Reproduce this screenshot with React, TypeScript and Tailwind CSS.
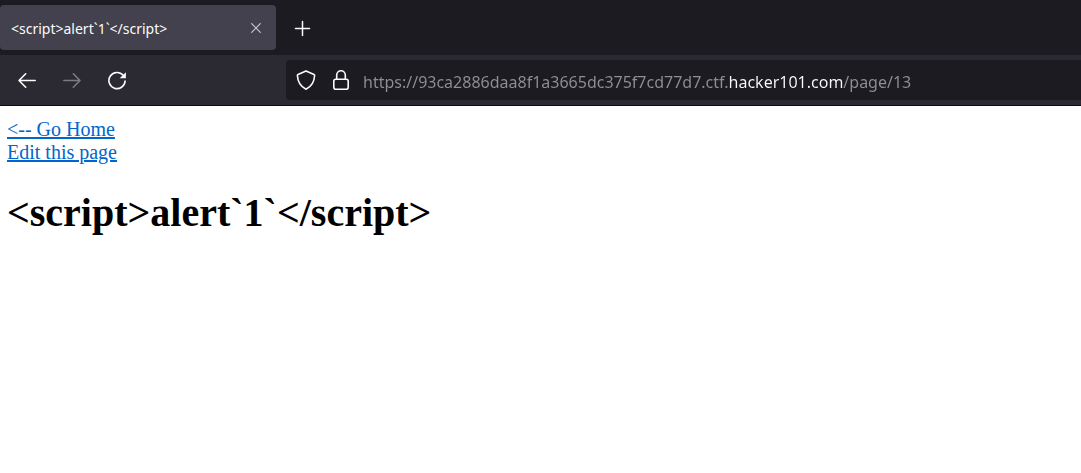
import { useState } from "react";

const PAYLOAD = "<script>alert`1`</script>";

export default function App() {
  const [address, setAddress] = useState(
    "https://93ca2886daa8f1a3665dc375f7cd77d7.ctf.hacker101.com/page/13"
  );

  return (
    <div className="min-h-screen bg-white">
      <header className="border-b border-[#0c0c0d] bg-[#2b2a33] font-['Noto_Sans',sans-serif] text-[#fbfbfe]">
        <div className="flex items-center bg-[#1c1b22] pt-[5px] pb-[5px]">
          <div className="flex h-[45px] w-[276px] items-center justify-between rounded bg-[#42414d] pr-3 pl-[11px]">
            <span className="pt-0.5 text-[14px] leading-5">{PAYLOAD}</span>
            <button type="button" aria-label="Close tab" className="flex size-4 items-center justify-center text-[#c8c8cf]">
              <svg className="size-4" viewBox="0 0 16 16" fill="none" stroke="currentColor" strokeWidth="1.2">
                <path d="M3.7 3.7 12.3 12.3M12.3 3.7 3.7 12.3" strokeLinecap="round" />
              </svg>
            </button>
          </div>
          <button type="button" aria-label="New tab" className="ml-4 flex size-5 items-center justify-center">
            <svg className="size-5" viewBox="0 0 20 20" fill="none" stroke="currentColor" strokeWidth="1.5" strokeLinecap="round">
              <path d="M10.5 3.5v14M3.5 10.5h14" />
            </svg>
          </button>
        </div>

        <nav className="flex items-center pt-[5px] pb-[5px]">
          <div className="flex w-[286px] shrink-0 items-center gap-[25px] pl-[17px]">
            <button type="button" aria-label="Back" className="size-5">
              <svg className="size-5" viewBox="0 0 20 20" fill="none" stroke="currentColor" strokeWidth="1.6" strokeLinecap="round" strokeLinejoin="round">
                <path d="M18.2 10.5H2M8.7 3.8 2 10.5l6.7 6.7" />
              </svg>
            </button>
            <button type="button" aria-label="Forward" disabled className="size-5 text-[#7c7b81]">
              <svg className="size-5" viewBox="0 0 20 20" fill="none" stroke="currentColor" strokeWidth="1.6" strokeLinecap="round" strokeLinejoin="round">
                <path d="M1.8 10.5H18M11.3 3.8l6.7 6.7-6.7 6.7" />
              </svg>
            </button>
            <button type="button" aria-label="Reload" className="size-5">
              <svg className="size-5" viewBox="0 0 20 20" fill="none" stroke="currentColor" strokeWidth="1.6" strokeLinecap="round">
                <path d="M16.2 5.3A8.1 8.1 0 1 0 18.1 11" />
                <path d="M18.9 2.3v6h-6.2z" fill="currentColor" stroke="none" />
              </svg>
            </button>
          </div>

          <div className="flex h-10 min-w-0 flex-1 items-center rounded-l bg-[#1c1b22] pl-[10px]">
            <button type="button" aria-label="Tracking protection" className="size-5">
              <svg className="size-5" viewBox="0 0 20 20" fill="none" stroke="currentColor" strokeWidth="1.6" strokeLinejoin="round">
                <path d="M10 .9 18 4.4q.7.3.6 1.1C18.3 11.5 15.8 16.4 10 19.2 4.2 16.4 1.7 11.5 1.4 5.5q-.1-.8.6-1.1z" />
              </svg>
            </button>
            <button type="button" aria-label="Site security" className="ml-[15px] size-5">
              <svg className="size-5" viewBox="0 0 20 20" fill="none" stroke="currentColor" strokeWidth="1.6">
                <rect x="2.8" y="9.2" width="14.4" height="10" rx="2" />
                <path d="M5.7 9V5.1a4.3 4.3 0 0 1 8.6 0V9" />
              </svg>
            </button>
            <input
              type="text"
              aria-label="Address"
              value={address}
              onChange={(event) => setAddress(event.target.value)}
              className="ml-3 h-7 min-w-0 flex-1 bg-[linear-gradient(90deg,#8f8f94_367px,#fbfbfe_367px,#fbfbfe_480px,#8f8f94_480px)] bg-clip-text pt-1 text-[16px] leading-6 text-transparent caret-white outline-none"
            />
          </div>
        </nav>
      </header>

      <main className="px-[7px] pt-3 font-['Liberation_Serif',serif]">
        <nav className="flex flex-col items-start text-[20px] leading-[23px] text-[#0066cc]">
          <a href="#home" className="underline">{"<-- Go Home"}</a>
          <a href="#edit" className="underline">Edit this page</a>
        </nav>
        <h1 className="mt-[26px] text-[40px] leading-[46px] font-bold text-black">{PAYLOAD}</h1>
      </main>
    </div>
  );
}
